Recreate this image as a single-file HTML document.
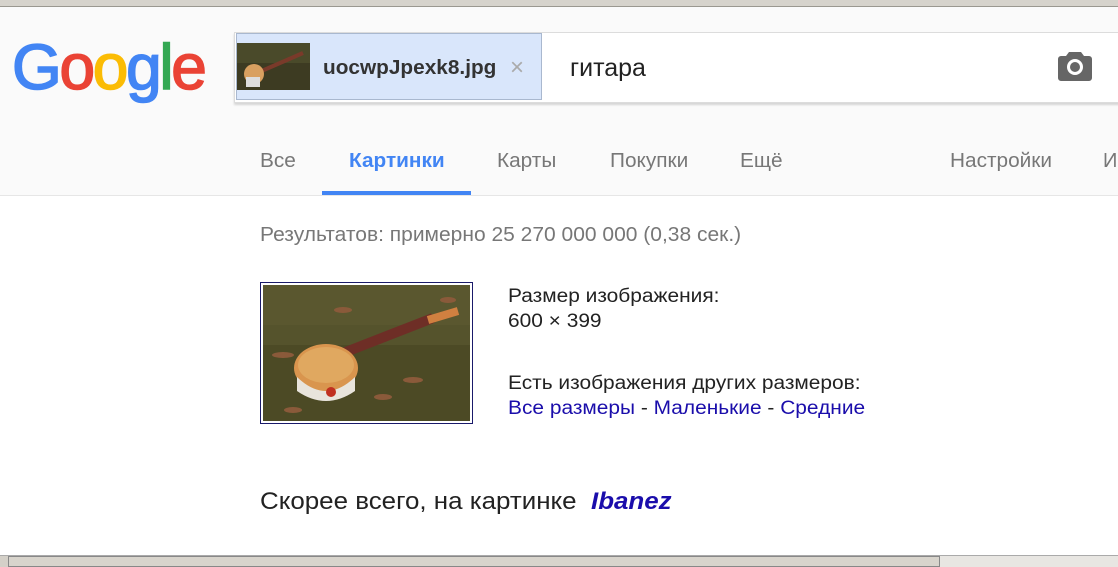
<!DOCTYPE html>
<html><head><meta charset="utf-8"><style>
*{margin:0;padding:0;box-sizing:border-box}
body{width:1118px;height:567px;overflow:hidden;background:#fff;font-family:"Liberation Sans",Arial,sans-serif;position:relative}
.a{position:absolute;white-space:nowrap}
.n{display:inline-block;transform-origin:left center}
</style></head><body>
<div class="a" style="left:0;top:0;width:1118px;height:7px;background:#d6d3cc;border-bottom:1px solid #9a9890"></div>
<div class="a" style="left:0;top:7px;width:1118px;height:189px;background:#fafafa;border-bottom:1px solid #e6e6e6"></div>
<div class="a" style="left:12px;top:27px;font-size:64px;letter-spacing:-2.3px;-webkit-text-stroke:1.6px;line-height:80px"><span style="color:#4285f4">G</span><span style="color:#ea4335">o</span><span style="color:#fbbc05">o</span><span style="color:#4285f4">g</span><span style="color:#34a853">l</span><span style="color:#ea4335">e</span></div>
<div class="a" style="left:234px;top:32px;width:890px;height:71px;background:#fff;border:1px solid #dcdcdc;box-shadow:0 2px 2px rgba(0,0,0,.15)"></div>
<div class="a" style="left:236px;top:33px;width:306px;height:67px;background:#d9e6fb;border:1px solid #a9b8cf"></div>
<svg class="a" style="left:237px;top:43px" width="73" height="47" viewBox="0 0 73 47"><rect width="73" height="47" fill="#4a4a2a"/><rect y="20" width="73" height="27" fill="#3d3b22"/><line x1="20" y1="30" x2="66" y2="10" stroke="#7a3a2a" stroke-width="4"/><circle cx="17" cy="31" r="10" fill="#d9a060"/><rect x="9" y="34" width="14" height="10" fill="#ddd"/></svg>
<div class="a" style="left:323px;top:57px;font-size:20px;font-weight:bold;color:#333"><span class="n" style="transform:scaleX(1.04)">uocwpJpexk8.jpg</span></div>
<div class="a" style="left:510px;top:54px;font-size:24px;color:#aaa">×</div>
<div class="a" style="left:570px;top:54px;font-size:25px;color:#222">гитара</div>
<svg class="a" style="left:1058px;top:51px" width="34" height="30" viewBox="0 0 34 30"><path d="M11 1h12l3 4h5a3 3 0 0 1 3 3v19a3 3 0 0 1-3 3H3a3 3 0 0 1-3-3V8a3 3 0 0 1 3-3h5z" fill="#666"/><circle cx="17" cy="16" r="8" fill="#fff"/><circle cx="17" cy="16" r="5" fill="#666"/></svg>
<div class="a" style="left:260px;top:150px;font-size:20px;color:#777"><span class="n" style="transform:scaleX(1.04)">Все</span></div>
<div class="a" style="left:349px;top:150px;font-size:20px;color:#4285f4;font-weight:bold"><span class="n" style="transform:scaleX(1.04)">Картинки</span></div>
<div class="a" style="left:322px;top:191px;width:149px;height:4px;background:#4285f4"></div>
<div class="a" style="left:497px;top:150px;font-size:20px;color:#777"><span class="n" style="transform:scaleX(1.04)">Карты</span></div>
<div class="a" style="left:610px;top:150px;font-size:20px;color:#777"><span class="n" style="transform:scaleX(1.04)">Покупки</span></div>
<div class="a" style="left:740px;top:150px;font-size:20px;color:#777"><span class="n" style="transform:scaleX(1.04)">Ещё</span></div>
<div class="a" style="left:950px;top:150px;font-size:20px;color:#777"><span class="n" style="transform:scaleX(1.04)">Настройки</span></div>
<div class="a" style="left:1103px;top:150px;font-size:20px;color:#777">И</div>
<div class="a" style="left:260px;top:224px;font-size:20px;color:#777"><span class="n" style="transform:scaleX(1.05)">Результатов: примерно 25 270 000 000 (0,38 сек.)</span></div>
<div class="a" style="left:260px;top:282px;width:213px;height:142px;border:1px solid #1a1a6a;background:#fff;padding:2px">
<svg width="207" height="136" viewBox="0 0 207 136"><rect width="207" height="136" fill="#55532c"/><rect y="60" width="207" height="76" fill="#4a4824" opacity=".8"/><rect x="0" y="0" width="207" height="40" fill="#5e5a32" opacity=".6"/><line x1="70" y1="72" x2="170" y2="33" stroke="#6e2e26" stroke-width="10"/><line x1="165" y1="35" x2="195" y2="26" stroke="#d08040" stroke-width="8"/><ellipse cx="63" cy="83" rx="32" ry="24" fill="#d9954e"/><ellipse cx="63" cy="80" rx="28" ry="18" fill="#e0a860"/><path d="M34 92 q29 28 58 0 v14 q-29 20 -58 0z" fill="#e8e4dc"/><circle cx="68" cy="107" r="5" fill="#c03020"/><g fill="#8a5a3a"><ellipse cx="150" cy="95" rx="10" ry="3"/><ellipse cx="120" cy="112" rx="9" ry="3"/><ellipse cx="80" cy="25" rx="9" ry="3"/><ellipse cx="20" cy="70" rx="11" ry="3"/><ellipse cx="30" cy="125" rx="9" ry="3"/><ellipse cx="185" cy="15" rx="8" ry="3"/></g></svg></div>
<div class="a" style="left:508px;top:284px;font-size:19px;color:#222;line-height:25px"><span class="n" style="transform:scaleX(1.1)">Размер изображения:<br>600 × 399</span></div>
<div class="a" style="left:508px;top:371px;font-size:19px;color:#222;line-height:25px"><span class="n" style="transform:scaleX(1.1)">Есть изображения других размеров:<br><span style="color:#1a0dab">Все размеры</span> - <span style="color:#1a0dab">Маленькие</span> - <span style="color:#1a0dab">Средние</span></span></div>
<div class="a" style="left:260px;top:488px;font-size:24px;color:#222"><span class="n" style="transform:scaleX(1.08)">Скорее всего, на картинке&nbsp; <b style="color:#1a0dab;font-style:italic">Ibanez</b></span></div>
<div class="a" style="left:0;top:555px;width:1118px;height:12px;background:#d4d0c8;border-top:1px solid #aaa"></div>
<div class="a" style="left:8px;top:556px;width:932px;height:11px;background:#d8d4cc;border:1px solid #888"></div>
<div class="a" style="left:940px;top:556px;width:178px;height:11px;background:#e8e6e2"></div>
</body></html>
